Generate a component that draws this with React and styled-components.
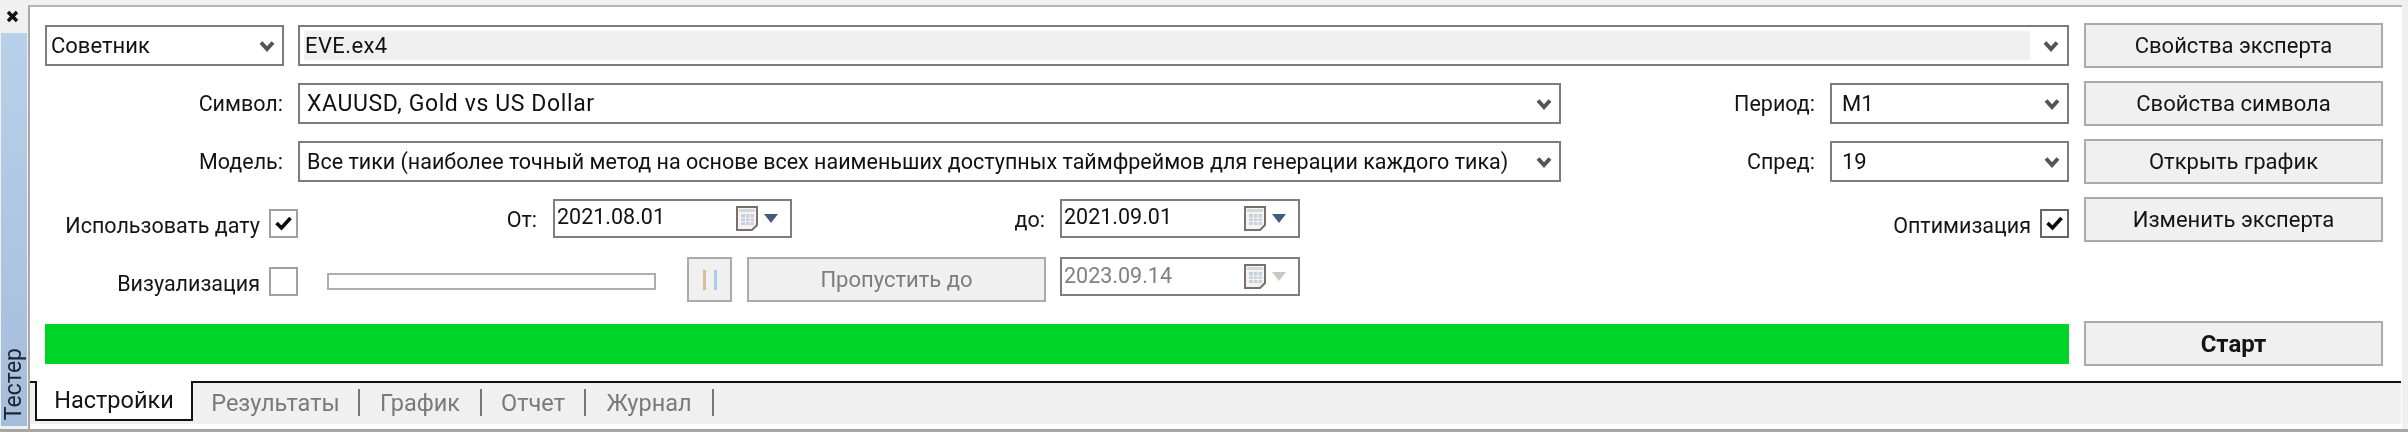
import React from "react";
import styled, { createGlobalStyle } from "styled-components";

const Global = createGlobalStyle`
  html, body { margin: 0; padding: 0; background: #f0f0f0; }
  body { font-family: "Roboto", "Liberation Sans", sans-serif; font-size: 21.5px; color: #111; }
`;

const Shell = styled.div`
  width: 2408px;
  height: 432px;
  display: flex;
  box-sizing: border-box;
  overflow: hidden;
  background: #f0f0f0;
  border-bottom: 3px solid #a6a6a6;
  filter: blur(0.35px);
`;
const Rail = styled.div`
  width: 27px;
  flex: none;
  display: flex;
  flex-direction: column;
  align-items: stretch;
`;
const CloseBox = styled.div`
  height: 33px;
  flex: none;
  display: flex;
  align-items: center;
  justify-content: center;
  svg { display: block; margin-right: 3px; }
`;
const RailStrip = styled.div`
  margin: 0 0 3px 1px;
  flex: 1;
  background: linear-gradient(180deg, #b9d0ea, #a4bddb);
  display: flex;
  align-items: flex-end;
  justify-content: center;
  padding-bottom: 6px;
`;
const RailTitle = styled.span`
  writing-mode: vertical-rl;
  transform: rotate(180deg);
  font-size: 23px;
  line-height: 24px;
  color: #1c2430;
`;
const Panel = styled.div`
  flex: 1;
  margin: 5px 6px 0 1px;
  display: flex;
  flex-direction: column;
  background: #fff;
  border-top: 2px solid #b5b5b5;
  border-left: 2px solid #a8a8a8;
`;
const Form = styled.div`
  padding: 16px 0 15px 15px;
  display: flex;
  flex-direction: column;
  gap: 13px;
`;
const Row = styled.div`
  height: 45px;
  display: flex;
  gap: 15px;
  margin-top: ${p => p.$top || 0}px;
`;
const Fields = styled.div`
  width: 2024px;
  flex: none;
  display: flex;
  align-items: center;
`;
const DateFields = styled.div`
  width: 2024px;
  flex: none;
  display: grid;
  grid-template-columns: 253px 255px 239px 268px 240px 1fr;
  align-items: center;
`;
const Label = styled.div`
  width: ${p => (p.$w ? p.$w + "px" : "auto")};
  flex: ${p => (p.$w ? "none" : "1")};
  text-align: right;
  padding-right: ${p => p.$pr ?? 15}px;
  box-sizing: border-box;
  white-space: nowrap;
  color: #141414;
`;
const Combo = styled.div`
  box-sizing: border-box;
  height: 41px;
  width: ${p => (p.$w ? p.$w + "px" : "auto")};
  flex: ${p => (p.$w ? "none" : "1")};
  margin-left: ${p => p.$ml || 0}px;
  border: 2px solid #7c7c7c;
  background: #fff;
  display: flex;
  align-items: center;
  padding: ${p => (p.$flat ? "4px 8px 4px 4px" : `0 7px 0 ${p.$pl ?? 7}px`)};
  color: #111;
  white-space: nowrap;
`;
const ComboText = styled.div`
  flex: 1;
  align-self: stretch;
  display: flex;
  align-items: center;
  font-size: ${p => p.$fs || 22}px;
  letter-spacing: ${p => p.$ls || 0}px;
  padding-left: ${p => (p.$selected ? "1px" : "0")};
  background: ${p => (p.$selected ? "#f0f0f0" : "transparent")};
  margin-right: ${p => (p.$selected ? "13px" : "0")};
`;
const Chevron = styled.svg`
  width: 16px;
  height: 12px;
  flex: none;
`;
const Button = styled.div`
  box-sizing: border-box;
  width: ${p => p.$w || 299}px;
  height: 45px;
  flex: none;
  margin-left: ${p => p.$ml || 0}px;
  border: 2px solid #ababab;
  background: #f0f0f0;
  display: flex;
  align-items: center;
  justify-content: center;
  font-size: ${p => (p.$bold ? 24 : 22)}px;
  color: ${p => (p.$off ? "#7d7d7d" : "#141414")};
  font-weight: ${p => (p.$bold ? 700 : 400)};
  white-space: nowrap;
`;
const CheckGroup = styled.div`
  display: flex;
  justify-content: flex-end;
  align-items: center;
  gap: 9px;
  flex: none;
  width: ${p => (p.$w ? p.$w + "px" : "auto")};
`;
const CheckText = styled.span`
  white-space: nowrap;
  color: #141414;
  margin-top: ${p => p.$top || 0}px;
`;
const Check = styled.div`
  box-sizing: border-box;
  width: 29px;
  height: 29px;
  flex: none;
  margin-top: ${p => p.$top || 0}px;
  border: 2px solid ${p => p.$c || "#a0a0a0"};
  background: #fff;
  display: flex;
  align-items: center;
  justify-content: center;
`;
const DateBox = styled.div`
  box-sizing: border-box;
  height: 39px;
  width: ${p => p.$w || 239}px;
  flex: none;
  margin-top: ${p => p.$top || 0}px;
  margin-left: ${p => p.$ml || 0}px;
  align-self: ${p => (p.$start ? "flex-start" : "auto")};
  border: 2px solid #7e7e7e;
  background: #fff;
  display: flex;
  align-items: center;
  padding: 0 12px 0 2px;
  color: ${p => (p.$off ? "#808080" : "#111")};
`;
const DateText = styled.span`
  flex: 1;
  margin-top: -3px;
`;
const CalendarIcon = styled.svg`
  width: 24px;
  height: 25px;
  flex: none;
  margin-right: 4px;
`;
const DropTriangle = styled.svg`
  width: 14px;
  height: 9px;
  flex: none;
`;
const Slider = styled.div`
  box-sizing: border-box;
  width: 329px;
  height: 17px;
  flex: none;
  margin: 4px 0 0 29px;
  border: 2px solid #adadad;
  background: #fff;
`;
const PauseBars = styled.div`
  display: flex;
  gap: 8px;
  height: 20px;
`;
const PauseBar = styled.div`
  width: 3px;
  background: ${p => p.$c};
`;
const Progress = styled.div`
  width: 2024px;
  height: 40px;
  flex: none;
  align-self: center;
  margin-top: 1px;
  background: #00d427;
`;
const TabBar = styled.div`
  flex: 1;
  margin-right: 1px;
  border-top: 2px solid #111;
  background: #f0f0f0;
  margin-bottom: 5px;
  display: flex;
  align-items: flex-start;
  padding-left: 5px;
  font-size: 23.5px;
`;
const ActiveTab = styled.div`
  box-sizing: border-box;
  width: 158px;
  height: 40px;
  margin-top: -2px;
  background: #fff;
  border: 2px solid #111;
  border-top: none;
  display: flex;
  align-items: center;
  justify-content: center;
  color: #141414;
`;
const Tab = styled.div`
  box-sizing: border-box;
  width: ${p => p.$w}px;
  height: 27px;
  margin-top: 6px;
  border-right: 2px solid #777;
  display: flex;
  align-items: center;
  justify-content: center;
  color: #7a7a7a;
`;

const ChevronDown = () => (
  <Chevron viewBox="0 0 16 12">
    <path d="M2 2.5 L8 9 L14 2.5" fill="none" stroke="#555" strokeWidth="4" />
  </Chevron>
);
const Calendar = () => (
  <CalendarIcon viewBox="0 0 24 25">
    <path d="M1 1 H21 V19 L16 24 H1 Z" fill="#f4f4f4" stroke="#7b6f68" strokeWidth="2" />
    <path d="M3 3 H19 V6 H3 Z" fill="#d8d8d8" />
    <path d="M5 8 H18 V19 H5 Z" fill="#c9d0dc" />
    <path d="M5 12 H18 M5 15.5 H18 M9.5 8 V19 M14 8 V19" stroke="#f4f4f4" strokeWidth="1" />
  </CalendarIcon>
);
const Triangle = ({ off }) => (
  <DropTriangle viewBox="0 0 14 9">
    <path d="M0 0 H14 L7 9 Z" fill={off ? "#c9c9c2" : "#46597f"} />
  </DropTriangle>
);
const Tick = () => (
  <svg width="19" height="17" viewBox="0 0 19 17">
    <path d="M2.5 8 L7.5 13 L16.5 3" fill="none" stroke="#0a0a0a" strokeWidth="3.6" />
  </svg>
);

export default function App() {
  return (
    <>
      <Global />
      <Shell>
        <Rail>
          <CloseBox>
            <svg width="13" height="13" viewBox="0 0 13 13">
              <path d="M2 2 L11 11 M11 2 L2 11" stroke="#111" strokeWidth="3.4" />
            </svg>
          </CloseBox>
          <RailStrip>
            <RailTitle>Тестер</RailTitle>
          </RailStrip>
        </Rail>
        <Panel>
          <Form>
            <Row>
              <Fields>
                <Combo $w={239} $pl={4}>
                  <ComboText>Советник</ComboText>
                  <ChevronDown />
                </Combo>
                <Combo $ml={14} $flat>
                  <ComboText $selected $ls={0.4}>EVE.ex4</ComboText>
                  <ChevronDown />
                </Combo>
              </Fields>
              <Button>Свойства эксперта</Button>
            </Row>
            <Row>
              <Fields>
                <Label $w={253}>Символ:</Label>
                <Combo $w={1263}>
                  <ComboText $fs={23} $ls={0.6}>XAUUSD, Gold vs US Dollar</ComboText>
                  <ChevronDown />
                </Combo>
                <Label>Период:</Label>
                <Combo $w={239} $pl={10}>
                  <ComboText>M1</ComboText>
                  <ChevronDown />
                </Combo>
              </Fields>
              <Button>Свойства символа</Button>
            </Row>
            <Row>
              <Fields>
                <Label $w={253}>Модель:</Label>
                <Combo $w={1263}>
                  <ComboText $fs={21.5}>Все тики (наиболее точный метод на основе всех наименьших доступных таймфреймов для генерации каждого тика)</ComboText>
                  <ChevronDown />
                </Combo>
                <Label>Спред:</Label>
                <Combo $w={239} $pl={10}>
                  <ComboText>19</ComboText>
                  <ChevronDown />
                </Combo>
              </Fields>
              <Button>Открыть график</Button>
            </Row>
            <Row>
              <DateFields>
                <CheckGroup>
                  <CheckText $top={11}>Использовать дату</CheckText>
                  <Check $top={8}><Tick /></Check>
                </CheckGroup>
                <Label $pr={16}>От:</Label>
                <DateBox $top={-3}>
                  <DateText>2021.08.01</DateText>
                  <Calendar />
                  <Triangle />
                </DateBox>
                <Label>до:</Label>
                <DateBox $w={240} $top={-3}>
                  <DateText>2021.09.01</DateText>
                  <Calendar />
                  <Triangle />
                </DateBox>
                <CheckGroup>
                  <CheckText $top={11}>Оптимизация</CheckText>
                  <Check $top={8} $c="#666"><Tick /></Check>
                </CheckGroup>
              </DateFields>
              <Button>Изменить эксперта</Button>
            </Row>
            <Row $top={2}>
              <Fields>
                <CheckGroup $w={253}>
                  <CheckText $top={7}>Визуализация</CheckText>
                  <Check $top={4} />
                </CheckGroup>
                <Slider />
                <Button $w={45} $off $ml={31}>
                  <PauseBars>
                    <PauseBar $c="#dcbb9a" />
                    <PauseBar $c="#a9cbec" />
                  </PauseBars>
                </Button>
                <Button $off $ml={15}>Пропустить до</Button>
                <DateBox $w={240} $ml={14} $off $start>
                  <DateText>2023.09.14</DateText>
                  <Calendar />
                  <Triangle off />
                </DateBox>
              </Fields>
            </Row>
            <Row $top={6}>
              <Progress />
              <Button $bold>Старт</Button>
            </Row>
          </Form>
          <TabBar>
            <ActiveTab>Настройки</ActiveTab>
            <Tab $w={167}>Результаты</Tab>
            <Tab $w={122}>График</Tab>
            <Tab $w={104}>Отчет</Tab>
            <Tab $w={128}>Журнал</Tab>
          </TabBar>
        </Panel>
      </Shell>
    </>
  );
}
